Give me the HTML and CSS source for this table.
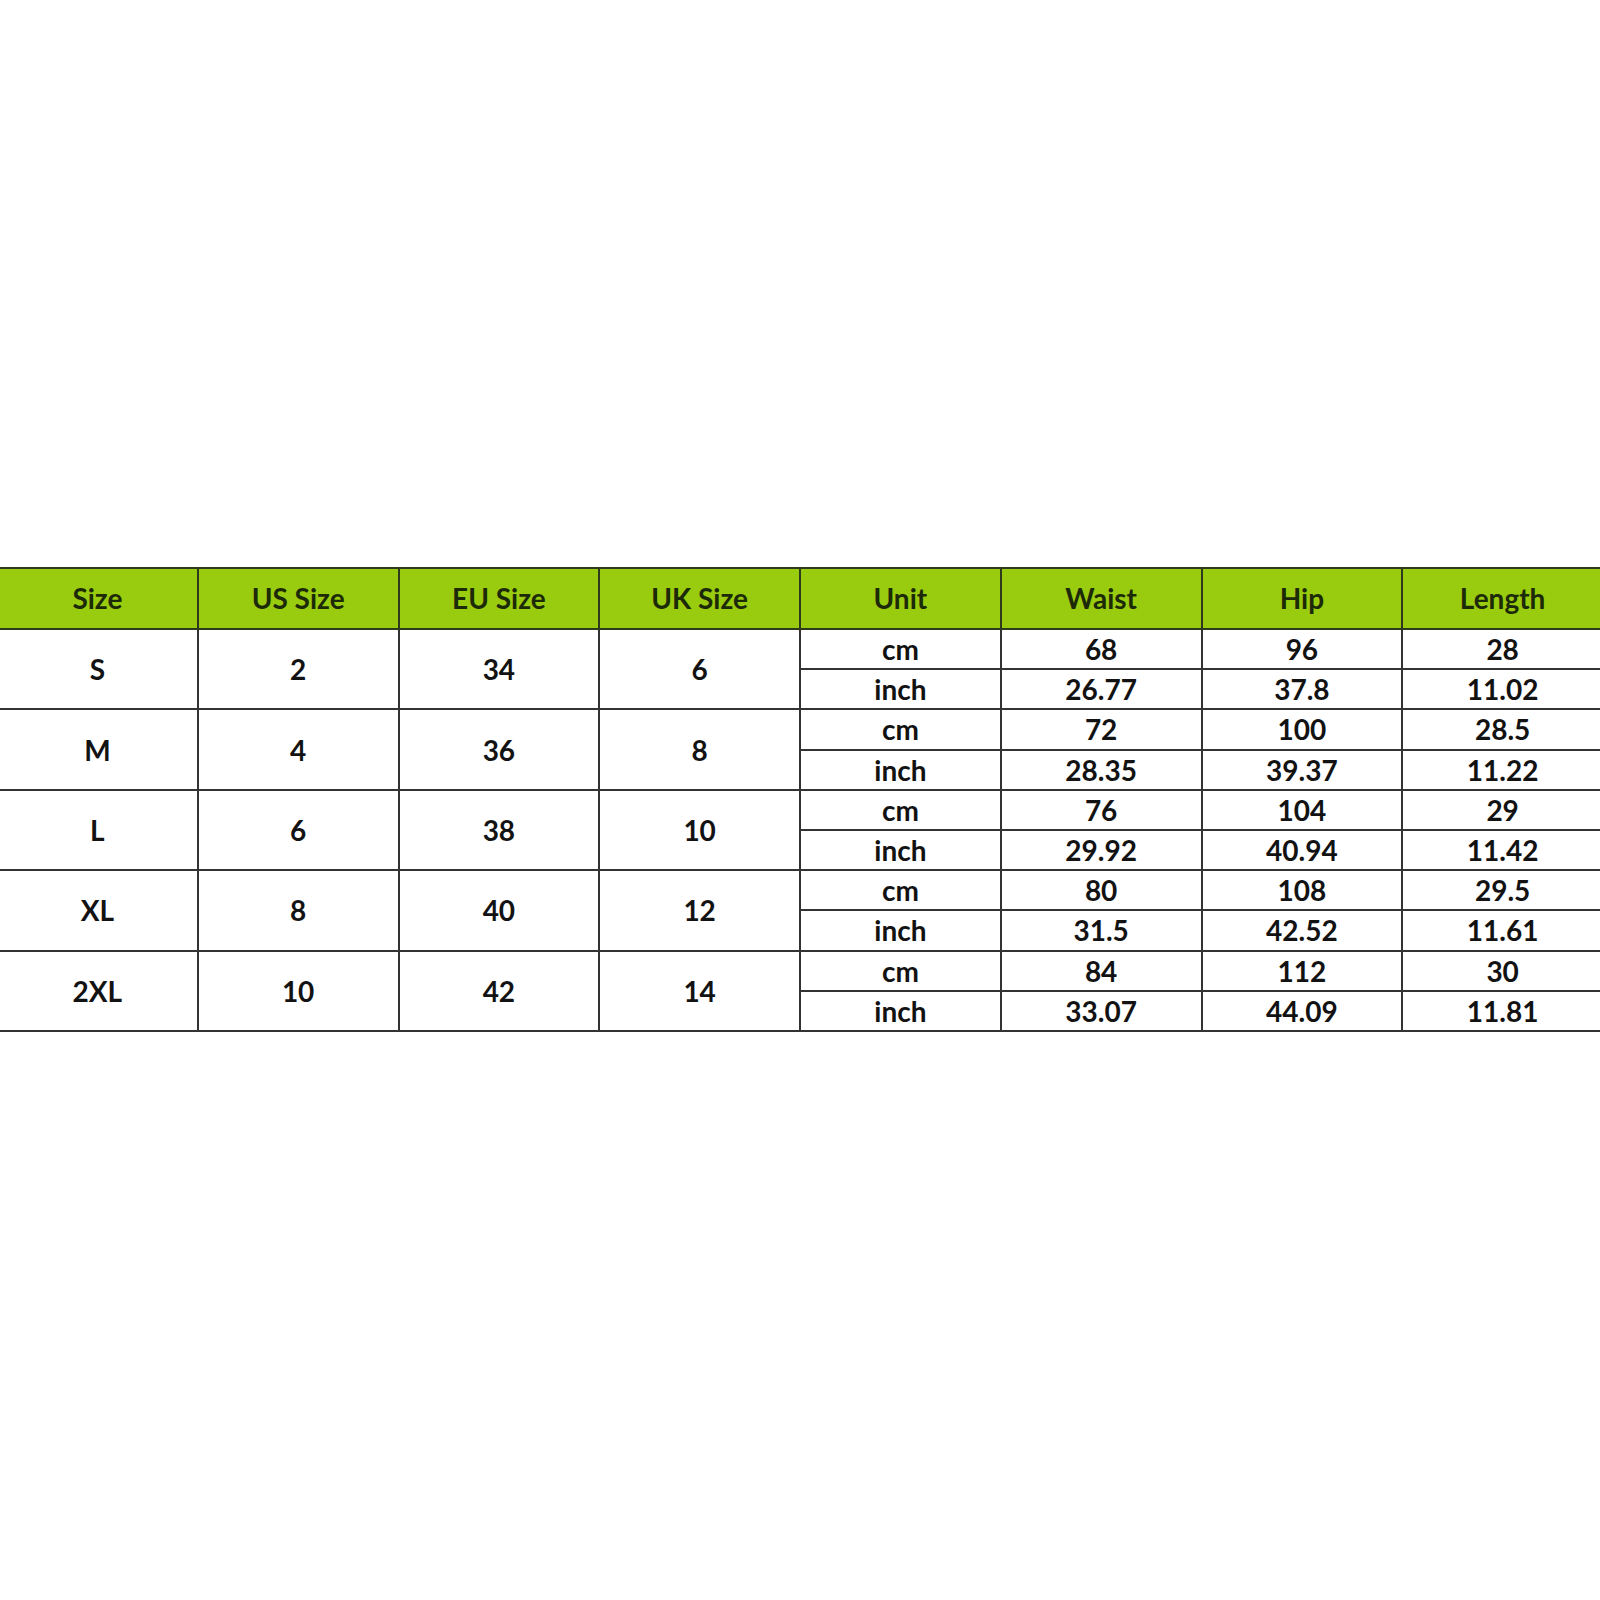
FILE: index.html
```html
<!DOCTYPE html>
<html>
<head>
<meta charset="utf-8">
<link rel="stylesheet" href="styles.css">
</head>
<body>
<div class="page">
<table class="chart">
  <colgroup>
    <col class="c"><col class="c"><col class="c"><col class="c"><col class="c"><col class="c"><col class="c"><col class="c">
  </colgroup>
  <thead>
    <tr class="head">
      <th>Size</th><th>US Size</th><th>EU Size</th><th>UK Size</th><th>Unit</th><th>Waist</th><th>Hip</th><th>Length</th>
    </tr>
  </thead>
  <tbody>
    <tr><td rowspan="2">S</td><td rowspan="2">2</td><td rowspan="2">34</td><td rowspan="2">6</td><td class="u">cm</td><td>68</td><td>96</td><td>28</td></tr>
    <tr class="low"><td class="u">inch</td><td>26.77</td><td>37.8</td><td>11.02</td></tr>
    <tr><td rowspan="2">M</td><td rowspan="2">4</td><td rowspan="2">36</td><td rowspan="2">8</td><td class="u">cm</td><td>72</td><td>100</td><td>28.5</td></tr>
    <tr class="low"><td class="u">inch</td><td>28.35</td><td>39.37</td><td>11.22</td></tr>
    <tr><td rowspan="2">L</td><td rowspan="2">6</td><td rowspan="2">38</td><td rowspan="2">10</td><td class="u">cm</td><td>76</td><td>104</td><td>29</td></tr>
    <tr class="low"><td class="u">inch</td><td>29.92</td><td>40.94</td><td>11.42</td></tr>
    <tr><td rowspan="2">XL</td><td rowspan="2">8</td><td rowspan="2">40</td><td rowspan="2">12</td><td class="u">cm</td><td>80</td><td>108</td><td>29.5</td></tr>
    <tr class="low"><td class="u">inch</td><td>31.5</td><td>42.52</td><td>11.61</td></tr>
    <tr><td rowspan="2">2XL</td><td rowspan="2">10</td><td rowspan="2">42</td><td rowspan="2">14</td><td class="u">cm</td><td>84</td><td>112</td><td>30</td></tr>
    <tr class="low"><td class="u">inch</td><td>33.07</td><td>44.09</td><td>11.81</td></tr>
  </tbody>
</table>
</div>
</body>
</html>
```
FILE: styles.css
```css
html, body {
  margin: 0;
  padding: 0;
  background: #ffffff;
}
.page {
  width: 1600px;
  height: 1600px;
  overflow: hidden;
  padding-top: 567px;
  box-sizing: border-box;
}
.chart {
  margin-left: -4px;
  width: 1608px;
  border-collapse: collapse;
  table-layout: fixed;
  font-family: "Lato", "Open Sans", "Liberation Sans", sans-serif;
  font-weight: 700;
  font-size: 28px;
  color: #121212;
}
.chart th, .chart td {
  border: 2px solid #333333;
  text-align: center;
  vertical-align: middle;
  padding: 0;
}
.chart th {
  background: #99cc0f;
  color: #1c2a08;
  height: 59px;
  line-height: 59px;
  border-color: #2f3a1c;
}
.chart td {
  height: 38.2px;
  line-height: 38px;
}
```
